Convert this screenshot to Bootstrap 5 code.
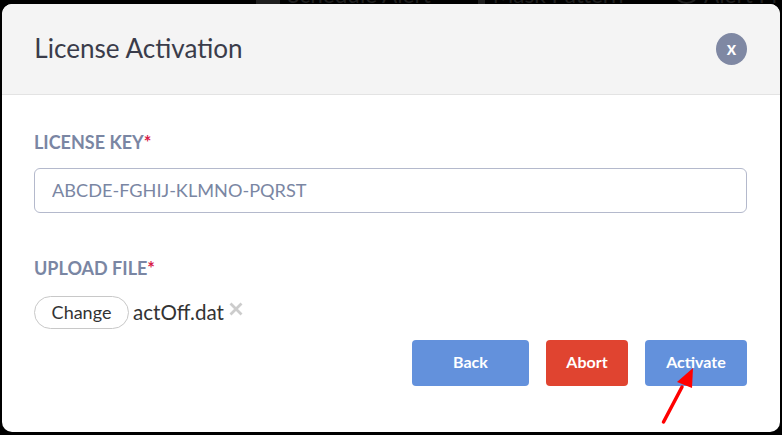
<!DOCTYPE html>
<html lang="en">
<head>
  <meta charset="UTF-8" />
  <meta name="viewport" content="width=device-width, initial-scale=1.0"/>
  <title>License Activation</title>
  <link href="https://cdn.jsdelivr.net/npm/bootstrap@5.3.0/dist/css/bootstrap.min.css" rel="stylesheet"/>
  <style>
    html, body { height: 100%; overflow: hidden; }
    body { font-family: Lato, sans-serif; background: #000; padding: 0 2px 3px 2px; }
    .lic-behind { height: 4px; overflow: hidden; padding-left: 254px; color: #1f1f1f; font-size: 22.5px; line-height: 22px; white-space: nowrap; }
    .lic-behind-in { margin-top: -16px; }
    .lic-behind i { display: block; height: 20px; background: #1f1f1f; }
    .lic-behind i.lic-round { border-radius: 50%; height: 20px; margin-top: 0; background: none; border: 2px solid #1f1f1f; }
    .lic-modal { height: 428px; border: 0; border-radius: 10px; position: relative; background: #fff; }
    .lic-header { height: 91px; background: #f4f4f4; border-bottom: 1px solid #e3e3e3; border-radius: 10px 10px 0 0; padding: 0 33px 0 33px; }
    .lic-title { font-size: 26.1px; font-weight: 400; color: #3a3c4a; margin: 0 0 1px -0.7px; line-height: 1; }
    .lic-close { width: 31px; height: 32px; border: 0; padding: 0 0 2px; border-radius: 50%; background: #7f88a3; color: #fff; font-weight: 700; font-size: 18px; line-height: 1; }
    .lic-body { padding: 37px 33px 0 32px; }
    .lic-label { display: block; font-size: 18px; font-weight: 700; color: #7a86a3; line-height: 20px; margin: 0 0 16px; }
    .lic-label span { color: #d81b4a; }
    .lic-input { height: 45px; border: 1px solid #b4b9cc; border-radius: 6px; color: #7a86a3; font-size: 18.15px; padding: 0 17px 1px; margin-bottom: 45px; font-family: Lato, sans-serif; }
    .lic-input::placeholder { color: #7a86a3; opacity: 1; }
    .lic-upload { margin-top: 18px; }
    .lic-change { height: 33px; width: 95px; padding: 0 0 2px; border: 1px solid #c8c8c8; border-radius: 17px; background: #fff; color: #333; font-size: 18px; line-height: 1; }
    .lic-file { font-size: 20.6px; color: #333; margin-left: 4px; line-height: 33px; }
    .lic-remove { margin-left: 5px; margin-top: 6px; align-self: flex-start; display: block; }
    .lic-actions { margin-top: 11px; gap: 17px; }
    .lic-btn { height: 46px; border: 0; border-radius: 4px; color: #fff; font-weight: 700; font-size: 16px; padding: 0 0 2px; }
    .lic-btn-blue { background: #6391dc; }
    .lic-btn-red { background: #e04430; }
    .lic-arrow { position: absolute; left: 660px; top: 366px; }
  </style>
</head>
<body>

<div class="lic-behind">
  <div class="d-flex lic-behind-in">
    <i style="width:25px"></i><span style="width:195px;margin-left:7px">Schedule Alert</span>
    <i style="width:7px"></i><span style="width:186px;margin-left:8px">Mask Pattern</span>
    <i class="lic-round" style="width:24px"></i><span style="margin-left:6px">Alert Pr</span>
  </div>
</div>

<div class="modal-content lic-modal">
  <div class="lic-header d-flex align-items-center justify-content-between">
    <h5 class="lic-title">License Activation</h5>
    <button class="lic-close" type="button">x</button>
  </div>
  <div class="lic-body">
    <label class="lic-label">LICENSE KEY<span>*</span></label>
    <input type="text" class="form-control lic-input" placeholder="ABCDE-FGHIJ-KLMNO-PQRST" />
    <label class="lic-label mb-0">UPLOAD FILE<span>*</span></label>
    <div class="d-flex align-items-center lic-upload">
      <button class="lic-change" type="button">Change</button>
      <span class="lic-file">actOff.dat</span>
      <svg class="lic-remove" width="14" height="14" viewBox="0 0 14 14"><path d="M1.5 1.5 L12.5 12.5 M12.5 1.5 L1.5 12.5" stroke="#ccc" stroke-width="2.8"/></svg>
    </div>
    <div class="d-flex justify-content-end lic-actions">
      <button class="lic-btn lic-btn-blue" style="width:117px" type="button">Back</button>
      <button class="lic-btn lic-btn-red" style="width:82px" type="button">Abort</button>
      <button class="lic-btn lic-btn-blue" style="width:102px" type="button">Activate</button>
    </div>
  </div>
</div>

<svg class="lic-arrow" width="40" height="66" viewBox="0 0 40 66">
  <path d="M3.5 56 L22 21" stroke="#f00" stroke-width="3.5" stroke-linecap="round" fill="none"/>
  <path d="M33 2 L32 22 L17 16 Z" fill="#f00"/>
</svg>

<script src="https://cdn.jsdelivr.net/npm/bootstrap@5.3.0/dist/js/bootstrap.bundle.min.js"></script>
</body>
</html>
